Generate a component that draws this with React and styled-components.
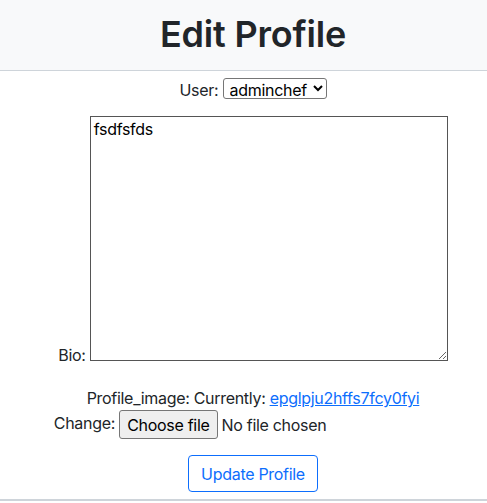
import React from 'react';
import styled, { createGlobalStyle } from 'styled-components';

const GlobalStyle = createGlobalStyle`
  body {
    margin: 0;
    font-family: Inter, "Liberation Sans", Arial, sans-serif;
    font-size: 16px;
    letter-spacing: -0.3px;
    color: #212529;
    background: #fff;
  }
`;

const Header = styled.header`
  height: 70px;
  background-color: #f8f9fa;
  border-bottom: 1px solid #ced4da;
  display: flex;
  align-items: center;
  justify-content: center;
  padding-left: 19px;
`;

const Title = styled.h1`
  margin: 0;
  font-size: 36px;
  font-weight: 600;
  line-height: 1.2;
  letter-spacing: -0.2px;
`;

const Form = styled.form`
  padding-left: 19px;
  text-align: center;
`;

const Row = styled.p`
  margin: ${(p) => p.$margin || '0'};
  line-height: 1.5;
`;

const Select = styled.select`
  font-family: inherit;
  font-size: 16px;
  letter-spacing: inherit;
  height: 21px;
  padding: 0 2px;
  border: 1px solid #767676;
  border-radius: 3px;
  background: #fff;
  color: #000;
`;

const TextArea = styled.textarea`
  width: 358px;
  height: 245px;
  box-sizing: border-box;
  border: 1px solid #555;
  padding: 2px 3px;
  font-family: inherit;
  font-size: 16px;
  letter-spacing: inherit;
  color: #000;
  vertical-align: baseline;
`;

const Link = styled.a`
  color: #0d6efd;
  text-decoration: underline;
`;

const FileControl = styled.label`
  display: inline-flex;
  align-items: center;
  gap: 4px;
  width: 333px;
  vertical-align: middle;
  text-align: left;
  color: #212529;
`;

const HiddenInput = styled.input`
  display: none;
`;

const FileButton = styled.span`
  display: inline-flex;
  align-items: center;
  box-sizing: border-box;
  height: 29px;
  padding: 0 7px;
  border: 1px solid #767676;
  border-radius: 3px;
  background: #efefef;
  color: #000;
`;

const SubmitButton = styled.button`
  font-family: inherit;
  font-size: 16px;
  letter-spacing: inherit;
  color: #0d6efd;
  background: #fff;
  border: 1px solid #0d6efd;
  border-radius: 4px;
  padding: 0 12px;
  height: 37px;
  line-height: 1.5;
`;

const Footer = styled.footer`
  margin-top: 7px;
  border-top: 2px solid #ced4da;
  height: 10px;
`;

export default function App() {
  return (
    <>
      <GlobalStyle />
      <Header>
        <Title>Edit Profile</Title>
      </Header>
      <Form onSubmit={(e) => e.preventDefault()}>
        <Row $margin="7px 0 0">
          <label htmlFor="id_user">User:</label>{' '}
          <Select id="id_user" defaultValue="adminchef">
            <option value="adminchef">adminchef</option>
          </Select>
        </Row>
        <Row $margin="14px 0 0">
          <label htmlFor="id_bio">Bio:</label>{' '}
          <TextArea id="id_bio" defaultValue="fsdfsfds" />
        </Row>
        <Row $margin="19px 0 0">
          Profile_image: Currently: <Link href="#">epglpju2hffs7fcy0fyi</Link>
          <br />
          Change:{' '}
          <FileControl>
            <HiddenInput type="file" id="id_profile_image" />
            <FileButton>Choose file</FileButton>
            <span>No file chosen</span>
          </FileControl>
        </Row>
        <Row $margin="16px 0 0">
          <SubmitButton type="submit">Update Profile</SubmitButton>
        </Row>
      </Form>
      <Footer />
    </>
  );
}
